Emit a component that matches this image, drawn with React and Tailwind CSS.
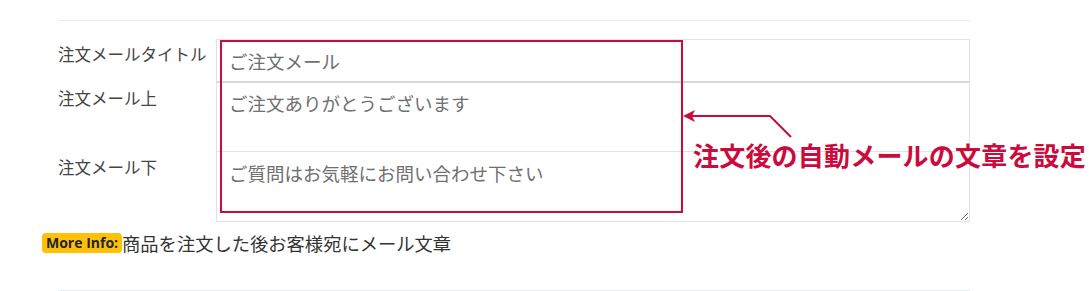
export default function App() {
  const cjk = { fontFamily: '"Noto Sans CJK JP", "Noto Sans", sans-serif' };

  return (
    <div className="relative w-[1089px] h-[291px] bg-white overflow-hidden" style={cjk}>
      <div className="pt-[20px] mx-[58px] w-[912px]">
        <div className="border-t border-[#e9ecef]" />
      </div>

      <div className="mt-[18px] ml-[58px] w-[912px] flex">
        <div className="w-[158px] text-[16.5px] leading-[24px] text-[#444]">
          <div className="h-[44px] pt-[3px]">注文メールタイトル</div>
          <div className="h-[69px] pt-[3px]">注文メール上</div>
          <div className="h-[70px] pt-[3px]">注文メール下</div>
        </div>
        <div className="flex-1 flex flex-col">
          <input
            defaultValue="ご注文メール"
            className="h-[44px] w-full border border-[#dfe2e7] border-b-2 border-b-[#d3d7de] px-[12px] text-[18.5px] text-[#707070] outline-none"
            style={cjk}
          />
          <textarea
            defaultValue="ご注文ありがとうございます"
            className="h-[69px] w-full border-x border-b border-[#dfe2e7] px-[12px] pt-[7px] text-[18.5px] leading-[26px] text-[#707070] resize-none outline-none block"
            style={cjk}
          />
          <textarea
            defaultValue="ご質問はお気軽にお問い合わせ下さい"
            className="h-[70px] w-full border-x border-b border-[#dfe2e7] px-[12px] pt-[8px] text-[18.5px] leading-[26px] text-[#707070] outline-none block"
            style={cjk}
          />
        </div>
      </div>

      <div className="mt-[9px] ml-[42px] flex items-center">
        <span
          className="bg-[#ffc107] rounded-[4px] px-[4px] h-[20px] leading-[20px] text-[14px] font-bold text-[#212529]"
          style={{ fontFamily: '"Open Sans", sans-serif' }}
        >
          More Info:
        </span>
        <span className="text-[18.3px] leading-[24px] text-[#333]">商品を注文した後お客様宛にメール文章</span>
      </div>

      <div className="absolute left-[58px] top-[290px] w-[912px] border-t border-[#e9ecef]" />

      {/* annotation overlay */}
      <div className="absolute left-[220px] top-[40px] w-[463px] h-[173px] border-2 border-[#cc0a3c]" />
      <svg className="absolute left-0 top-0" width="1089" height="291">
        <polyline points="690,116 770,116 791,137" fill="none" stroke="#cc0a3c" strokeWidth="2" />
        <polygon points="683,116 695,110 692,116 695,122" fill="#cc0a3c" />
      </svg>
      <div className="absolute left-[693px] top-[139px] text-[26px] leading-[32px] font-bold tracking-[0.2px] text-[#cc0a3c] whitespace-nowrap">
        注文後の自動メールの文章を設定
      </div>
    </div>
  );
}
